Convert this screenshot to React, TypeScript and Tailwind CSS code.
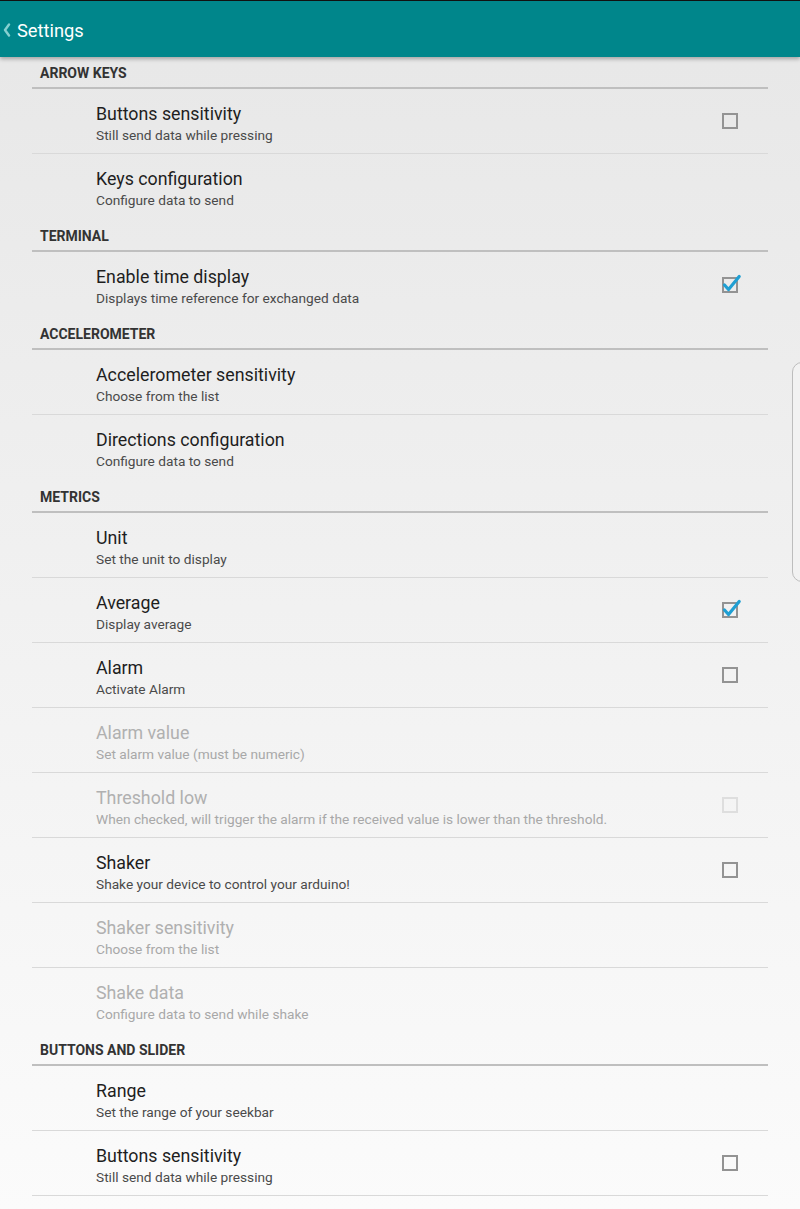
import React from "react";

type Item = { title: string; sub: string; check?: "on" | "off"; disabled?: boolean };
type Section = { name: string; items: Item[] };

const SECTIONS: Section[] = [
  {
    name: "ARROW KEYS",
    items: [
      { title: "Buttons sensitivity", sub: "Still send data while pressing", check: "off" },
      { title: "Keys configuration", sub: "Configure data to send" },
    ],
  },
  {
    name: "TERMINAL",
    items: [{ title: "Enable time display", sub: "Displays time reference for exchanged data", check: "on" }],
  },
  {
    name: "ACCELEROMETER",
    items: [
      { title: "Accelerometer sensitivity", sub: "Choose from the list" },
      { title: "Directions configuration", sub: "Configure data to send" },
    ],
  },
  {
    name: "METRICS",
    items: [
      { title: "Unit", sub: "Set the unit to display" },
      { title: "Average", sub: "Display average", check: "on" },
      { title: "Alarm", sub: "Activate Alarm", check: "off" },
      { title: "Alarm value", sub: "Set alarm value (must be numeric)", disabled: true },
      {
        title: "Threshold low",
        sub: "When checked, will trigger the alarm if the received value is lower than the threshold.",
        check: "off",
        disabled: true,
      },
      { title: "Shaker", sub: "Shake your device to control your arduino!", check: "off" },
      { title: "Shaker sensitivity", sub: "Choose from the list", disabled: true },
      { title: "Shake data", sub: "Configure data to send while shake", disabled: true },
    ],
  },
  {
    name: "BUTTONS AND SLIDER",
    items: [
      { title: "Range", sub: "Set the range of your seekbar" },
      { title: "Buttons sensitivity", sub: "Still send data while pressing", check: "off" },
    ],
  },
];

const CheckBox = ({ state, disabled }: { state: "on" | "off"; disabled?: boolean }) => (
  <div className="relative w-[16px] h-[16px] mr-[30px] self-center">
    <div className={`w-[16px] h-[16px] border-2 ${disabled ? "border-[#dedede]" : "border-[#939393]"}`} />
    {state === "on" && (
      <svg className="absolute -top-[3px] left-0" width="20" height="19" viewBox="0 0 20 19">
        <path d="M2.5 11 L6.5 15.5 L17.2 2.5" fill="none" stroke="#1f9fd3" strokeWidth="3.2" strokeLinecap="round" strokeLinejoin="round" />
      </svg>
    )}
  </div>
);

const Row = ({ item, divider }: { item: Item; divider: boolean }) => (
  <div className={`h-[65px] flex items-start ${divider ? "border-b border-[#d9d9d9]" : ""}`}>
    <div className="flex-1 pl-[64px] pt-[13px]">
      <div className={`text-[17.8px] leading-[24px] ${item.disabled ? "text-[#b0b0b0]" : "text-[#1e1e1e]"}`}>
        {item.title}
      </div>
      <div className={`text-[13.7px] leading-[18px] ${item.disabled ? "text-[#a8a8a8]" : "text-[#4a4a4a]"}`}>
        {item.sub}
      </div>
    </div>
    {item.check && <CheckBox state={item.check} disabled={item.disabled} />}
  </div>
);

export default function App() {
  return (
    <div
      className="relative w-[800px] h-[1209px] overflow-hidden bg-gradient-to-b from-[#e7e7e7] to-[#fbfbfb]"
      style={{ fontFamily: "Roboto, 'Liberation Sans', sans-serif" }}
    >
      <header className="relative z-10 h-[57px] bg-[#00868b] border-t border-[#111] flex items-center shadow-[0_2px_4px_rgba(0,0,0,0.3)]">
        {/* back chevron */}
        <svg className="ml-[3px] mt-[1px]" width="8" height="14" viewBox="0 0 8 14">
          <path d="M6 1.5 L2 7 L6 12.5" fill="none" stroke="#86d0d0" strokeWidth="2.4" strokeLinecap="round" strokeLinejoin="round" />
        </svg>
        <span className="ml-[6px] text-white text-[18.3px] mt-[3px]">Settings</span>
      </header>

      <div className="mx-[32px]">
        {SECTIONS.map((sec, si) => (
          <div key={si}>
            <div
              className={`h-[32px] border-b-2 border-[#bfbfbf] pl-[8px] flex items-center ${si > 0 ? "mt-[1px]" : ""}`}
            >
              <span className="text-[14px] font-bold text-[#333] mt-[3px]">{sec.name}</span>
            </div>
            {sec.items.map((it, i) => (
              <Row
                key={i}
                item={it}
                divider={i < sec.items.length - 1 || si === SECTIONS.length - 1}
              />
            ))}
          </div>
        ))}
      </div>

      <div className="absolute right-[-14px] top-[362px] w-[22px] h-[220px] rounded-[10px] border border-[#bdbdbd] bg-[#f2f2f2]" />
    </div>
  );
}
